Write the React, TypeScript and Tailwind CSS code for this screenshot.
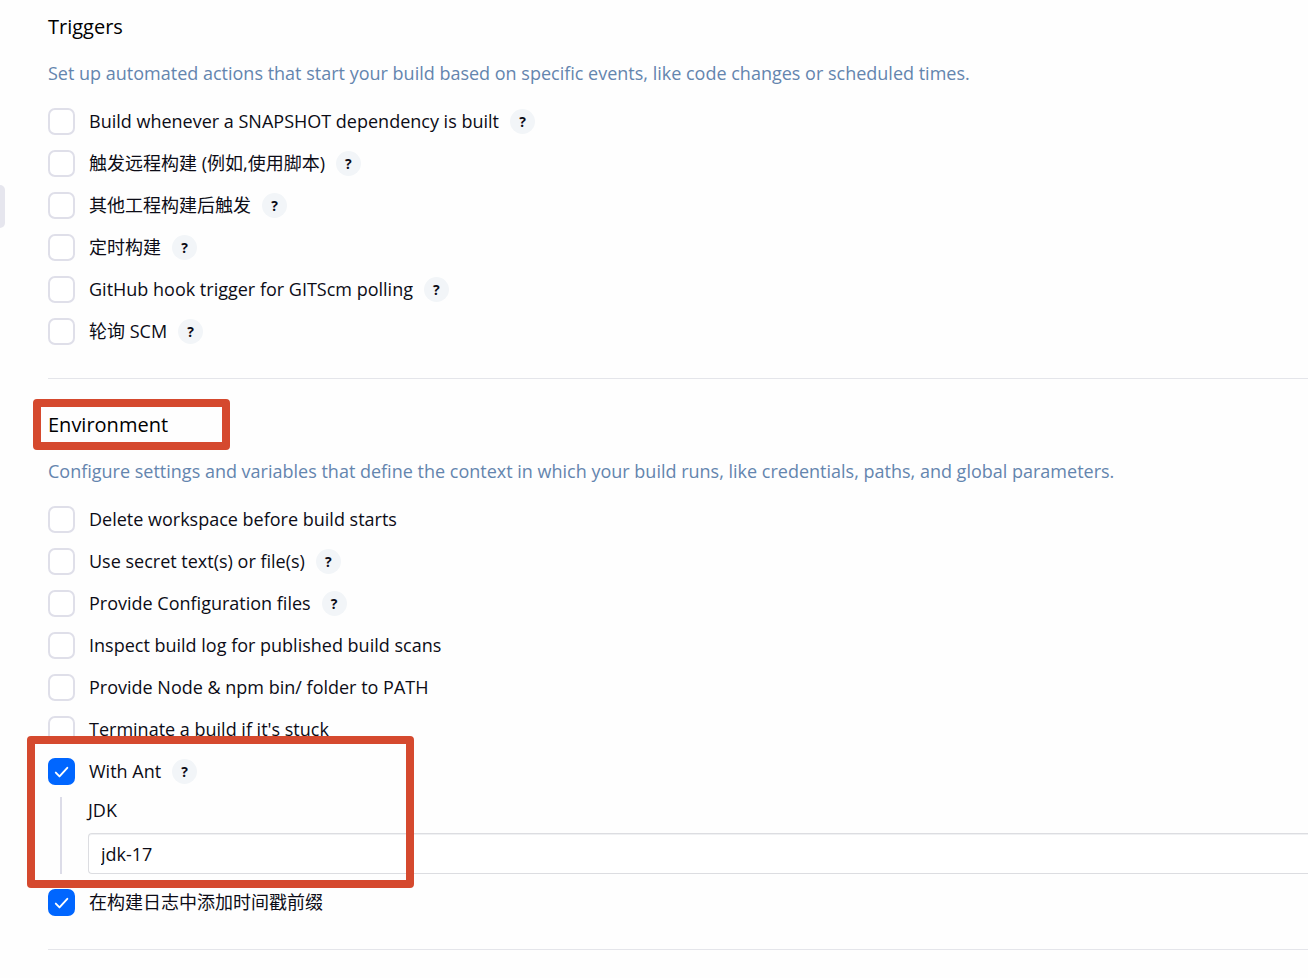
import { useId, useState } from "react";
import type { ReactNode } from "react";

type Option = { label: string; help?: boolean; checked?: boolean };

const triggers: Option[] = [
  { label: "Build whenever a SNAPSHOT dependency is built", help: true },
  { label: "触发远程构建 (例如,使用脚本)", help: true },
  { label: "其他工程构建后触发", help: true },
  { label: "定时构建", help: true },
  { label: "GitHub hook trigger for GITScm polling", help: true },
  { label: "轮询 SCM", help: true },
];

const environment: Option[] = [
  { label: "Delete workspace before build starts" },
  { label: "Use secret text(s) or file(s)", help: true },
  { label: "Provide Configuration files", help: true },
  { label: "Inspect build log for published build scans" },
  { label: "Provide Node & npm bin/ folder to PATH" },
  { label: "Terminate a build if it's stuck" },
];

function CheckRow({ label, help = false, checked = false }: Option) {
  const id = useId();
  const [on, setOn] = useState(checked);
  return (
    <div className="flex h-[27px] items-center">
      <span className="grid size-[27px] shrink-0 place-items-center">
        <input
          id={id}
          type="checkbox"
          checked={on}
          onChange={(e) => setOn(e.target.checked)}
          className="col-start-1 row-start-1 size-[27px] appearance-none rounded-[7px] border-2 border-[#dfdfe9] bg-white checked:border-[#0066ff] checked:bg-[#0066ff]"
        />
        {on && (
          <svg
            viewBox="0 0 27 27"
            className="pointer-events-none col-start-1 row-start-1 size-[27px]"
            fill="none"
            stroke="white"
            strokeWidth="1.9"
            strokeLinecap="round"
            strokeLinejoin="round"
            aria-hidden="true"
          >
            <path d="M7.8 14.6l3.7 3.8L19.3 9.8" />
          </svg>
        )}
      </span>
      <label htmlFor={id} className="ml-3.5 pb-0.5 whitespace-nowrap">
        {label}
      </label>
      {help && (
        <button
          type="button"
          aria-label={`Help for ${label}`}
          className="ml-[11px] grid size-[25px] shrink-0 place-items-center rounded-full bg-[#f2f5f8] text-sm font-bold leading-none"
        >
          ?
        </button>
      )}
    </div>
  );
}

function Description({ children }: { children: ReactNode }) {
  return (
    <p className="mt-[19px] mb-[23px] text-[#6485ae]">{children}</p>
  );
}

export default function App() {
  return (
    <div className="flex min-h-screen overflow-hidden bg-[#fefefe] font-['Open_Sans','Noto_Sans_CJK_SC',sans-serif] text-lg leading-6 text-[#0c0c16]">
      <aside className="w-12 shrink-0 pt-[185px]">
        <div className="h-[43px] w-[5px] rounded-r-xl bg-[#e6e6ee]" />
      </aside>
      <main className="min-w-0 flex-1">
        <section className="border-b border-[#e4e5ea] pt-3 pb-[33px]">
          <h2 className="text-xl leading-[30px] text-black">Triggers</h2>
          <Description>
            Set up automated actions that start your build based on specific events, like code changes or scheduled
            times.
          </Description>
          <div className="flex flex-col gap-[15px]">
            {triggers.map((o) => (
              <CheckRow key={o.label} {...o} />
            ))}
          </div>
        </section>

        <section className="border-b border-[#e4e5ea] pt-[31px] pb-[33px]">
          <div className="relative">
            <h2 className="text-xl leading-[30px] text-black">Environment</h2>
            <div className="pointer-events-none absolute -top-[11px] -left-[15px] h-[51px] w-[197px] rounded-[4px] border-8 border-[#d5492e]" />
          </div>
          <Description>
            Configure settings and variables that define the context in which your build runs, like credentials,
            paths, and global parameters.
          </Description>
          <div className="flex flex-col gap-[15px]">
            {environment.map((o) => (
              <CheckRow key={o.label} {...o} />
            ))}
            <div className="relative">
              <CheckRow label="With Ant" help checked />
              <div className="mt-3 ml-3 flex border-l-2 border-[#dcdce8]">
                <div className="ml-[26px] flex-1">
                  <label htmlFor="jdk" className="mb-2.5 block leading-[26px]">
                    JDK
                  </label>
                  <select
                    id="jdk"
                    defaultValue="jdk-17"
                    className="block h-[41px] w-full appearance-none rounded-l-[4px] border border-r-0 border-[#dcdde1] bg-white px-3 shadow-[inset_0_1px_0_#f0f1f3]"
                  >
                    <option>jdk-17</option>
                  </select>
                </div>
              </div>
              <div className="pointer-events-none absolute -top-[22px] -left-[21px] h-[152px] w-[387px] rounded-[4px] border-8 border-[#d5492e]" />
            </div>
            <CheckRow label="在构建日志中添加时间戳前缀" checked />
          </div>
        </section>
      </main>
    </div>
  );
}
